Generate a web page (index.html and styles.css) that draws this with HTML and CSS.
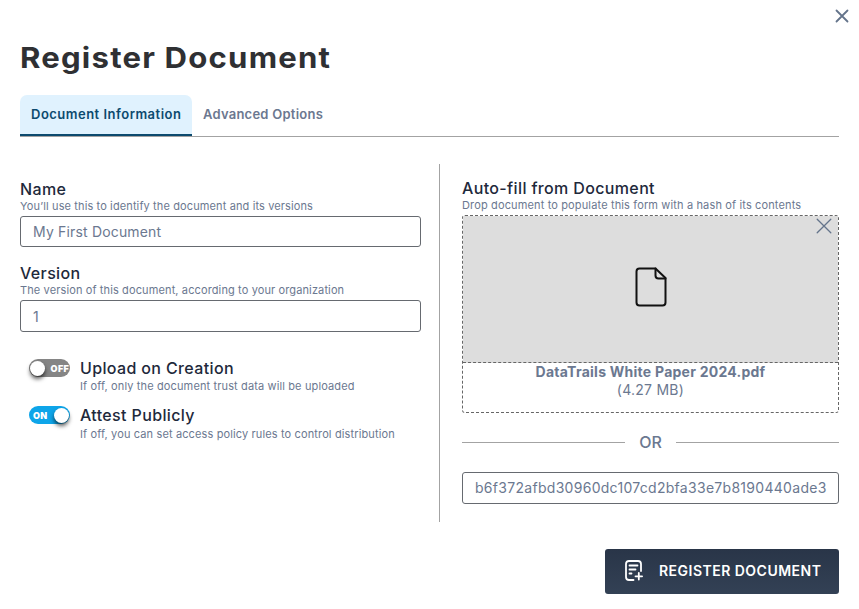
FILE: index.html
```html
<!DOCTYPE html>
<html lang="en">
<head>
<meta charset="utf-8">
<title>Register Document</title>
<link rel="stylesheet" href="styles.css">
</head>
<body>
<main class="dialog">
  <svg class="close" viewBox="0 0 14 14"><path d="M1.5 1.5 12.5 12.5M12.5 1.5 1.5 12.5"/></svg>
  <h1 class="title">Register Document</h1>
  <nav class="tabs">
    <a class="tab active"><span class="tab-info">Document Information</span></a>
    <a class="tab"><span class="tab-adv">Advanced Options</span></a>
  </nav>
  <div class="columns">
    <section class="left">
      <div class="field">
        <h2 class="label">Name</h2>
        <p class="hint">You’ll use this to identify the document and its versions</p>
        <div class="input short">My First Document</div>
      </div>
      <div class="field">
        <h2 class="label">Version</h2>
        <p class="hint">The version of this document, according to your organization</p>
        <div class="input">1</div>
      </div>
      <div class="option">
        <div class="switch off"><span class="knob"></span><span class="state">OFF</span></div>
        <div>
          <h2 class="label">Upload on Creation</h2>
          <p class="hint">If off, only the document trust data will be uploaded</p>
        </div>
      </div>
      <div class="option">
        <div class="switch on"><span class="state">ON</span><span class="knob"></span></div>
        <div>
          <h2 class="label">Attest Publicly</h2>
          <p class="hint low">If off, you can set access policy rules to control distribution</p>
        </div>
      </div>
    </section>
    <section class="right">
      <h2 class="label autofill">Auto-fill from Document</h2>
      <p class="hint">Drop document to populate this form with a hash of its contents</p>
      <div class="drop">
        <div class="preview">
          <svg class="remove" viewBox="0 0 16 16"><path d="M1.2 1.2 14.8 14.8M14.8 1.2 1.2 14.8"/></svg>
          <svg class="file" viewBox="0 0 32 40"><path d="M4.5 1.5H20.5L30.5 11V35.5Q30.5 38.500 27.500 38.500H4.500Q1.500 38.500 1.500 35.500V4.500Q1.500 1.500 4.500 1.500Z"/><path d="M20.500 1.500V8.500Q20.500 11.500 23.500 11.500H30.500"/></svg>
        </div>
        <p class="filename">DataTrails White Paper 2024.pdf</p>
        <p class="size">(4.27 MB)</p>
      </div>
      <div class="or"><span>OR</span></div>
      <div class="input hash">b6f372afbd30960dc107cd2bfa33e7b8190440ade3</div>
    </section>
  </div>
  <button class="submit">
    <svg class="note" viewBox="0 0 18 22"><path d="M8.500 20H4Q1 20 1 17V4Q1 1 4 1H13Q16 1 16 4V11"/><path d="M4.500 5.500H12.500M4.500 9.500H10.500M4.500 13.500H6.500"/><path d="M13.800 13V19.600M10.500 16.300H17.100"/></svg>
    <span>REGISTER DOCUMENT</span>
  </button>
</main>
</body>
</html>
```
FILE: styles.css
```css
* { box-sizing: border-box; }
body { margin: 0; background: #fff; font-family: Inter, sans-serif; color: #6b7890; }
h1, h2, p { margin: 0; }
svg { fill: none; stroke-linecap: round; stroke-linejoin: round; }
.dialog { position: relative; display: flex; flex-direction: column; height: 609px; padding: 39px 20px 15px; }
.close { position: absolute; left: 835px; top: 9px; width: 14px; height: 14px; stroke: #64748b; stroke-width: 1.8; }
.title { align-self: flex-start; height: 56px; line-height: 38px; font-size: 28.5px; font-weight: 700; letter-spacing: 1.1px; color: #2f3033; white-space: nowrap; transform: scaleX(1.092); transform-origin: 0 0; }
.tabs { display: flex; height: 42px; border-bottom: 1px solid #a3a3a3; font-size: 13px; line-height: 39px; font-weight: 600; }
.tab { padding: 0 11px; height: 41px; white-space: nowrap; }
.active { width: 172px; background: #e0f2fe; color: #0c4a6e; border-bottom: 2px solid #0c4a6e; border-radius: 7px 7px 0 0; }
.tab-info { letter-spacing: .49px; }
.tab-adv { letter-spacing: .24px; }
.columns { display: flex; height: 358px; margin-top: 27px; }
.left { flex: none; width: 420px; padding: 15px 18px 0 0; border-right: 1px solid #a3a3a3; }
.left .input { width: 401px; }
.right { flex: 1; min-width: 0; padding: 14px 0 0 22px; }
.label { font-size: 16px; line-height: 20px; font-weight: 450; letter-spacing: .36px; color: #1e293b; white-space: nowrap; }
.hint { height: 17px; font-size: 11px; line-height: 14px; letter-spacing: .12px; white-space: nowrap; }
.right .hint { letter-spacing: .14px; }
.field { height: 84px; }
.field + .field { height: 85px; }
.field + .field .hint { line-height: 15px; }
.input { height: 32px; padding: 0 12px; border: 1px solid #666a70; border-radius: 3px; font-size: 14px; line-height: 31px; letter-spacing: .17px; white-space: nowrap; overflow: hidden; }
.short { height: 31px; line-height: 30px; }
.hash { letter-spacing: .29px; line-height: 30px; }
.option { display: flex; gap: 10px; height: 47px; padding: 10px 0 0 9px; }
.option .hint { line-height: 17px; letter-spacing: .13px; }
.option .low { line-height: 19px; }
.switch { display: flex; align-items: center; justify-content: space-between; width: 41px; height: 18px; padding: 0 1px; margin-top: 1px; border-radius: 9px; color: #fff; font-size: 9px; font-weight: 900; }
.off { background: #858585; }
.off .state { letter-spacing: .3px; }
.on { background: #0ea5e9; }
.on .state { padding-left: 3px; letter-spacing: .3px; }
.knob { width: 15px; height: 15px; border-radius: 50%; background: #fff; box-shadow: 0 3px 4px rgba(0, 0, 0, .65); }
.drop { height: 198px; border: 1px dashed #666; border-radius: 3px; text-align: center; font-size: 14px; line-height: 18px; letter-spacing: .25px; }
.preview { position: relative; display: flex; justify-content: center; height: 147px; padding-top: 51px; background: #ddd; border-bottom: 1px dashed #666; }
.remove { position: absolute; right: 6px; top: 2px; width: 16px; height: 16px; stroke: #64748b; stroke-width: 1.3; }
.file { width: 32px; height: 40px; stroke: #111; stroke-width: 2; }
.filename { font-weight: 700; }
.or { display: flex; align-items: center; gap: 14px; height: 59px; font-size: 16px; font-weight: 500; }
.or span { position: relative; top: -1px; }
.or::before, .or::after { content: ""; flex: 1; height: 1px; background: #a3a3a3; }
.submit { display: flex; align-items: center; justify-content: flex-start; align-self: flex-end; width: 234px; height: 45px; margin-top: auto; padding: 0 0 2px 20px; gap: 16px; border: 0; border-radius: 3px; background: linear-gradient(#293548, #334155); color: #fff; font: 600 14px Inter, sans-serif; letter-spacing: .48px; white-space: nowrap; }
.note { flex: none; width: 18px; height: 22px; stroke: #fff; stroke-width: 1.8; }
```
